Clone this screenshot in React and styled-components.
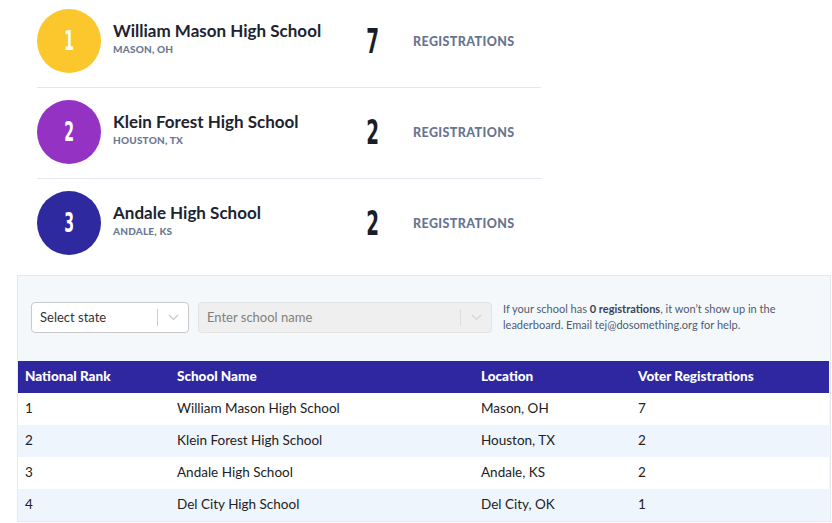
import styled, { createGlobalStyle } from "styled-components";

const GlobalStyle = createGlobalStyle`
  body {
    margin: 0;
    background: #fff;
    font-family: Lato, "Open Sans", sans-serif;
    overflow: hidden;
  }
`;

const topSchools = [
  { rank: 1, name: "William Mason High School", location: "Mason, OH", count: 7, color: "#fcc62d" },
  { rank: 2, name: "Klein Forest High School", location: "Houston, TX", count: 2, color: "#9432c4" },
  { rank: 3, name: "Andale High School", location: "Andale, KS", count: 2, color: "#2e299f" },
];

const rows = [
  { rank: 1, name: "William Mason High School", location: "Mason, OH", count: 7 },
  { rank: 2, name: "Klein Forest High School", location: "Houston, TX", count: 2 },
  { rank: 3, name: "Andale High School", location: "Andale, KS", count: 2 },
  { rank: 4, name: "Del City High School", location: "Del City, OK", count: 1 },
];

const Page = styled.div`
  width: 832px;
  height: 523px;
  overflow: hidden;
`;

const Leaderboard = styled.ol`
  list-style: none;
  margin: 0 0 6px 37px;
  padding: 0;
  width: 504px;
`;

const LeaderRow = styled.li`
  display: grid;
  grid-template-columns: 76px 257px 43px 1fr;
  align-items: center;
  padding: 12px 0 14px;
  border-bottom: 1px solid #e2e6ee;

  &:first-child {
    padding-top: 9px;
  }
  &:last-child {
    border-bottom: none;
  }
`;

const RankCircle = styled.div`
  width: 64px;
  height: 64px;
  border-radius: 50%;
  background: ${(p) => p.$color};
  color: #fff;
  display: flex;
  align-items: center;
  justify-content: center;
`;

const Condensed = styled.span`
  display: inline-block;
  font-family: "DejaVu Sans Condensed", "DejaVu Sans", sans-serif;
  font-weight: 700;
  font-size: ${(p) => p.$size}px;
  transform: scaleX(0.6);
  line-height: 1;
`;

const SchoolInfo = styled.div`
  display: flex;
  flex-direction: column;
  margin-top: -6px;
`;

const SchoolName = styled.span`
  font-size: 17px;
  font-weight: 700;
  color: #1d2330;
  line-height: 22px;
`;

const SchoolPlace = styled.span`
  font-size: 10px;
  font-weight: 900;
  color: #6b7892;
  text-transform: uppercase;
  line-height: 14px;
  letter-spacing: 0.2px;
`;

const Count = styled.div`
  color: #1a1d26;
  margin-left: -8px;
`;

const RegLabel = styled.span`
  font-size: 12.5px;
  font-weight: 900;
  color: #677590;
  letter-spacing: 0.4px;
`;

const Panel = styled.section`
  margin-left: 17px;
  width: 812px;
  background: #f5f8fb;
  border: 1px solid #e4e9f0;
  padding-top: 25px;
`;

const Filters = styled.div`
  display: flex;
  align-items: center;
  padding-left: 13px;
  margin-bottom: 28px;
`;

const SelectBox = styled.div`
  box-sizing: border-box;
  width: ${(p) => p.$width}px;
  height: 31px;
  margin-right: ${(p) => p.$gap}px;
  display: flex;
  align-items: center;
  border: 1px solid ${(p) => (p.$disabled ? "#e3e3e3" : "#c9c9c9")};
  border-radius: 4px;
  background: ${(p) => (p.$disabled ? "#efefef" : "#fff")};
  font-size: 13px;
  color: ${(p) => (p.$disabled ? "#808080" : "#333")};
`;

const SelectText = styled.span`
  flex: 1;
  padding-left: 8px;
`;

const Divider = styled.span`
  width: 1px;
  height: 17px;
  background: #ccc;
  opacity: ${(p) => (p.$disabled ? 0.5 : 1)};
`;

const Chevron = styled.span`
  width: 30px;
  display: flex;
  align-items: center;
  justify-content: center;
  color: #c4c4c4;
  opacity: ${(p) => (p.$disabled ? 0.6 : 1)};
`;

const HelpText = styled.p`
  margin: 0;
  width: 300px;
  font-size: 11px;
  line-height: 16px;
  color: #4f5b6f;

  b {
    font-weight: 700;
    color: #3a4356;
  }
`;

const Table = styled.table`
  width: 811px;
  border-collapse: collapse;
  table-layout: fixed;
  font-size: 13.5px;
`;

const HeadRow = styled.tr`
  height: 32px;
  background: #2e27a0;
`;

const Th = styled.th`
  color: #fff;
  text-align: left;
  font-weight: 900;
  padding: 0 0 3px 7px;
`;

const Tr = styled.tr`
  height: 32px;
  background: ${(p) => (p.$striped ? "#eff5fd" : "#fff")};
`;

const Td = styled.td`
  padding: 0 0 3px 7px;
  color: #222;
`;

const ChevronIcon = () => (
  <svg width="11" height="7" viewBox="0 0 11 7" fill="none">
    <path d="M1 1l4.5 4.5L10 1" stroke="currentColor" strokeWidth="1.1" />
  </svg>
);

const Select = ({ placeholder, width, gap, disabled }) => (
  <SelectBox $width={width} $gap={gap} $disabled={disabled}>
    <SelectText>{placeholder}</SelectText>
    <Divider $disabled={disabled} />
    <Chevron $disabled={disabled}>
      <ChevronIcon />
    </Chevron>
  </SelectBox>
);

export default function App() {
  return (
    <Page>
      <GlobalStyle />
      <Leaderboard>
        {topSchools.map((s) => (
          <LeaderRow key={s.rank}>
            <RankCircle $color={s.color}>
              <Condensed $size={26}>{s.rank}</Condensed>
            </RankCircle>
            <SchoolInfo>
              <SchoolName>{s.name}</SchoolName>
              <SchoolPlace>{s.location}</SchoolPlace>
            </SchoolInfo>
            <Count>
              <Condensed $size={34}>{s.count}</Condensed>
            </Count>
            <RegLabel>REGISTRATIONS</RegLabel>
          </LeaderRow>
        ))}
      </Leaderboard>

      <Panel>
        <Filters>
          <Select placeholder="Select state" width={158} gap={9} />
          <Select placeholder="Enter school name" width={294} gap={11} disabled />
          <HelpText>
            If your school has <b>0 registrations</b>, it won’t show up in the
            leaderboard. Email tej@dosomething.org for help.
          </HelpText>
        </Filters>
        <Table>
          <colgroup>
            <col style={{ width: 152 }} />
            <col style={{ width: 304 }} />
            <col style={{ width: 157 }} />
            <col />
          </colgroup>
          <thead>
            <HeadRow>
              <Th>National Rank</Th>
              <Th>School Name</Th>
              <Th>Location</Th>
              <Th>Voter Registrations</Th>
            </HeadRow>
          </thead>
          <tbody>
            {rows.map((r, i) => (
              <Tr key={r.rank} $striped={i % 2 === 1}>
                <Td>{r.rank}</Td>
                <Td>{r.name}</Td>
                <Td>{r.location}</Td>
                <Td>{r.count}</Td>
              </Tr>
            ))}
          </tbody>
        </Table>
      </Panel>
    </Page>
  );
}
